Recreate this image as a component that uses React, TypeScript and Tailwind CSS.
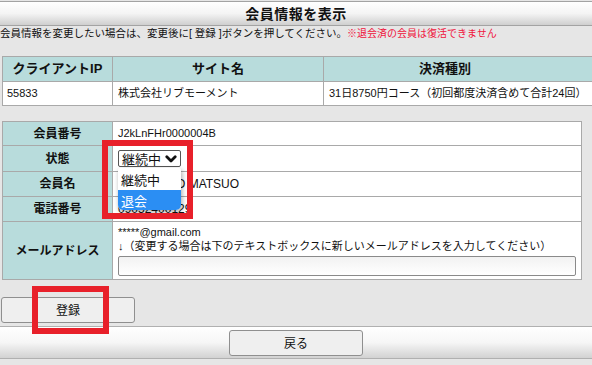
import React from "react";

const F = "font-['Liberation_Sans','Noto_Sans_CJK_JP',sans-serif]";

function Chevron() {
  return (
    <svg width="12" height="8" viewBox="0 0 12 8" className="ml-[4px]">
      <path d="M1.8 1.8 L6 6 L10.2 1.8" fill="none" stroke="#111" strokeWidth="2.8" strokeLinecap="round" strokeLinejoin="round" />
    </svg>
  );
}

export default function App() {
  const label = "flex items-center justify-center bg-[#b8dcdc] border-r border-[#a9a9a9] text-[12px] font-bold text-[#111]";
  const val = "flex items-center pl-[5px] bg-white text-[11px] text-[#111]";
  return (
    <div className={`relative w-[592px] h-[365px] overflow-hidden bg-[#e6e6e6] ${F} text-[#111]`}>
      {/* title bar */}
      <div className="mt-[1px] h-[25px] border-t border-b border-[#a3a3a3] bg-gradient-to-b from-white via-[#f4f4f4] to-[#cfcfcf] flex items-center justify-center">
        <span className="text-[14px] font-bold leading-none tracking-[0.5px]">会員情報を表示</span>
      </div>
      {/* notice */}
      <div className="h-[15px] leading-[15px] text-[10.5px] whitespace-nowrap">
        会員情報を変更したい場合は、変更後に[ 登録 ]ボタンを押してください。
        <span className="text-[#f0143c] text-[10px]">※退会済の会員は復活できません</span>
      </div>

      {/* table 1 */}
      <div className="ml-[2px] mt-[15px] w-[610px] border-t border-l border-[#a9a9a9]">
        <div className="grid grid-cols-[110px_211px_289px] h-[25px] bg-[#b8dcdc] border-b border-[#a9a9a9] text-[13px] font-bold">
          <div className="flex items-center justify-center border-r border-[#a9a9a9]">クライアントIP</div>
          <div className="flex items-center justify-center border-r border-[#a9a9a9]">サイト名</div>
          <div className="flex items-center pl-[95px] border-r border-[#a9a9a9]">決済種別</div>
        </div>
        <div className="grid grid-cols-[110px_211px_289px] h-[24px] bg-white border-b border-[#a9a9a9] text-[11px]">
          <div className="flex items-center pl-[4px] border-r border-[#a9a9a9]">55833</div>
          <div className="flex items-center pl-[5px] border-r border-[#a9a9a9]">株式会社リブモーメント</div>
          <div className="flex items-center pl-[5px] whitespace-nowrap">31日8750円コース（初回都度決済含めて合計24回）</div>
        </div>
      </div>

      {/* table 2 */}
      <div className="ml-[2px] mt-[15px] w-[580px] border border-[#a9a9a9]">
        <div className="grid grid-cols-[110px_1fr] h-[24px] border-b border-[#a9a9a9]">
          <div className={label}>会員番号</div>
          <div className={val}>J2kLnFHr0000004B</div>
        </div>
        <div className="grid grid-cols-[110px_1fr] h-[26px] border-b border-[#a9a9a9]">
          <div className={label}>状態</div>
          <div className={val}>
            <div className="relative">
              <div className="flex items-center h-[17px] w-[63px] pl-[3px] border border-[#555] rounded-[2px] bg-white text-[13px] leading-none font-['Noto_Sans_CJK_JP',sans-serif]">
                継続中<Chevron />
              </div>
              {/* open dropdown */}
              <div className="absolute left-0 top-[18px] z-10 w-[63px] bg-white rounded-b-[5px] rounded-t-[2px] shadow-[1px_2px_5px_rgba(0,0,0,0.35)] overflow-hidden text-[13px] leading-none font-['Noto_Sans_CJK_JP',sans-serif]">
                <div className="h-[22px] flex items-center pl-[3px]">継続中</div>
                <div className="h-[20px] flex items-center pl-[3px] bg-[#2b8ef3] text-white">退会</div>
              </div>
            </div>
          </div>
        </div>
        <div className="grid grid-cols-[110px_1fr] h-[25px] border-b border-[#a9a9a9]">
          <div className={label}>会員名</div>
          <div className={`${val} text-[12px]`}>YOSHIHIRO MATSUO</div>
        </div>
        <div className="grid grid-cols-[110px_1fr] h-[25px] border-b border-[#a9a9a9]">
          <div className={label}>電話番号</div>
          <div className={`${val} text-[12px]`}>09052400129</div>
        </div>
        <div className="grid grid-cols-[110px_1fr] h-[57px]">
          <div className={label}>メールアドレス</div>
          <div className="flex flex-col pl-[5px] pt-[3px] bg-white text-[11px]">
            <div className="h-[14px] leading-[14px]">*****@gmail.com</div>
            <div className="h-[14px] leading-[14px] whitespace-nowrap">↓（変更する場合は下のテキストボックスに新しいメールアドレスを入力してください）</div>
            <div className="mt-[3px] w-[458px] h-[20px] border border-[#8a8a8a] rounded-[2px] bg-gradient-to-b from-[#f2f2f2] to-white"></div>
          </div>
        </div>
      </div>

      {/* register button */}
      <div className="ml-[1px] mt-[17px] w-[134px] h-[26px] border border-[#8f8f8f] rounded-[3px] bg-[#efefef] flex items-center justify-center text-[12px] font-['Noto_Sans_CJK_JP',sans-serif]">
        登録
      </div>

      {/* footer */}
      <div className="mt-[3px] h-[33px] border-t border-b border-[#b0b0b0] bg-gradient-to-b from-white via-[#f6f6f6] to-[#d2d2d2] flex items-center justify-center">
        <div className="w-[134px] h-[26px] border border-[#8f8f8f] rounded-[3px] bg-[#efefef] flex items-center justify-center text-[12px] font-['Noto_Sans_CJK_JP',sans-serif]">
          戻る
        </div>
      </div>

      {/* red annotation boxes */}
      <div className="absolute left-[102px] top-[140px] w-[91px] h-[79px] border-[6px] border-[#e8202a] pointer-events-none z-20"></div>
      <div className="absolute left-[32px] top-[286px] w-[77px] h-[48px] border-[6px] border-[#e8202a] pointer-events-none z-20"></div>
    </div>
  );
}
